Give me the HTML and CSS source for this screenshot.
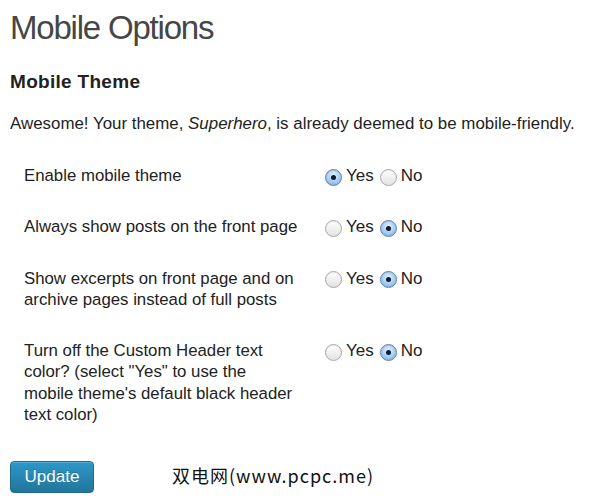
FILE: index.html
```html
<!DOCTYPE html>
<html>
<head>
<meta charset="utf-8">
<link rel="stylesheet" href="styles.css">
</head>
<body>
<div class="wrap">
  <h1 class="title">Mobile Options</h1>
  <h3 class="section">Mobile Theme</h3>
  <p class="intro">Awesome! Your theme, <em>Superhero</em>, is already deemed to be mobile-friendly.</p>
  <table class="form-table">
    <tr>
      <th>Enable mobile theme</th>
      <td>
        <div class="opts">
          <label class="opt"><span class="radio checked"></span>Yes</label>
          <label class="opt"><span class="radio"></span>No</label>
        </div>
      </td>
    </tr>
    <tr>
      <th>Always show posts on the front page</th>
      <td>
        <div class="opts">
          <label class="opt"><span class="radio"></span>Yes</label>
          <label class="opt"><span class="radio checked"></span>No</label>
        </div>
      </td>
    </tr>
    <tr>
      <th>Show excerpts on front page and on archive pages instead of full posts</th>
      <td>
        <div class="opts">
          <label class="opt"><span class="radio"></span>Yes</label>
          <label class="opt"><span class="radio checked"></span>No</label>
        </div>
      </td>
    </tr>
    <tr>
      <th>Turn off the Custom Header text color? (select "Yes" to use the mobile theme's default black header text color)</th>
      <td>
        <div class="opts">
          <label class="opt"><span class="radio"></span>Yes</label>
          <label class="opt"><span class="radio checked"></span>No</label>
        </div>
      </td>
    </tr>
  </table>
  <div class="actions">
    <button class="btn">Update</button>
  </div>
  <div class="watermark">双电网(www.pcpc.me)</div>
</div>
</body>
</html>
```

FILE: styles.css
```css
html, body {
  margin: 0;
  padding: 0;
  background: #ffffff;
}
body {
  font-family: "Liberation Sans", Arial, sans-serif;
  color: #222222;
}
.wrap {
  position: relative;
  padding: 0 10px;
}
.title {
  margin: 0;
  padding-top: 6px;
  font-size: 33px;
  line-height: 44px;
  font-weight: normal;
  color: #464646;
  letter-spacing: -1.2px;
}
.section {
  margin: 20px 0 0;
  font-size: 19px;
  line-height: 24px;
  font-weight: bold;
  color: #222222;
  letter-spacing: 0.3px;
}
.intro {
  margin: 19px 0 0;
  font-size: 16.9px;
  line-height: 22px;
}
.intro em {
  font-style: italic;
}
.form-table {
  border-collapse: collapse;
  margin-top: 15px;
  margin-left: 14px;
}
.form-table th {
  width: 275px;
  text-align: left;
  font-weight: normal;
  vertical-align: top;
  font-size: 16.8px;
  line-height: 21.3px;
  padding: 15px 26px 15px 0;
}
.form-table td {
  vertical-align: top;
  padding: 15px 0;
  font-size: 17px;
  line-height: 21px;
  white-space: nowrap;
}
.opts {
  display: flex;
  align-items: center;
  height: 21px;
  gap: 6px;
}
.opt {
  display: flex;
  align-items: center;
}
.radio {
  box-sizing: border-box;
  width: 17px;
  height: 17px;
  border-radius: 50%;
  border: 1px solid #a9a9a9;
  background: linear-gradient(#ffffff, #e2e2e2);
  margin-right: 4px;
  margin-top: 3px;
  position: relative;
  box-shadow: inset 0 1px 1px rgba(0,0,0,0.08);
}
.radio.checked {
  border-color: #5f86b4;
  background: radial-gradient(circle at 50% 35%, #e4f1fd 0%, #a6cbf0 55%, #6aa4e0 100%);
}
.radio.checked::after {
  content: "";
  position: absolute;
  left: 50%;
  top: 50%;
  width: 5px;
  height: 5px;
  margin: -2.5px 0 0 -2.5px;
  border-radius: 50%;
  background: #0a1c36;
}
.actions {
  margin-top: 21px;
}
.btn {
  width: 84px;
  height: 32px;
  border: 1px solid #1e6a8d;
  border-radius: 4px;
  background: linear-gradient(#2e98c8, #21759b);
  color: #ffffff;
  font-family: "Liberation Sans", Arial, sans-serif;
  font-size: 17px;
  padding: 0;
  box-shadow: inset 0 1px 0 rgba(120,200,230,0.5);
  text-shadow: 0 -1px 0 rgba(0,0,0,0.2);
}
.watermark {
  position: absolute;
  left: 172px;
  top: 462px;
  font-family: "Noto Sans CJK SC", sans-serif;
  font-size: 18px;
  line-height: 26px;
  color: #111111;
  letter-spacing: 1px;
}
```
